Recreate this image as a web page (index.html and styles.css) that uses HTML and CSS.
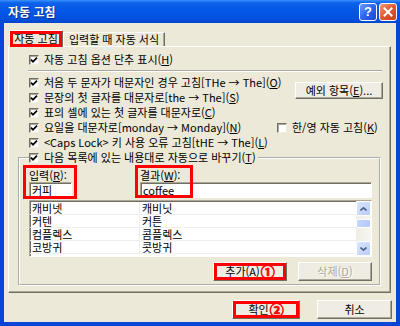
FILE: index.html
```html
<!DOCTYPE html>
<html lang="ko">
<head>
  <meta charset="UTF-8" />
  <title>자동 고침</title>
  <link rel="stylesheet" href="styles.css">
</head>
<body>
  <div class="window">
    <div class="titlebar">
      <span class="title">자동 고침</span>
      <div class="tb-buttons">
        <span class="tb-btn tb-help">?</span>
        <span class="tb-btn tb-close">
          <svg width="10" height="10" viewBox="0 0 10 10"><path d="M1.5 1.5 L8.5 8.5 M8.5 1.5 L1.5 8.5" stroke="#fff" stroke-width="2" stroke-linecap="square"/></svg>
        </span>
      </div>
    </div>

    <div class="client">
      <div class="tabs">
        <div class="tab active mark">자동 고침</div>
        <div class="tab">입력할 때 자동 서식</div>
      </div>

      <div class="panel">
        <div class="chk indent"><span class="cb on"><svg viewBox="0 0 8 8"><path d="M1 3.6 L3 5.8 L7 1.6" /></svg></span>자동 고침 옵션 단추 표시(<u>H</u>)</div>
        <div class="sep"></div>

        <div class="opts">
          <div class="opt-list">
            <div class="chk"><span class="cb on"><svg viewBox="0 0 8 8"><path d="M1 3.6 L3 5.8 L7 1.6" /></svg></span>처음 두 문자가 대문자인 경우 고침[THe → The](<u>O</u>)</div>
            <div class="chk"><span class="cb on"><svg viewBox="0 0 8 8"><path d="M1 3.6 L3 5.8 L7 1.6" /></svg></span>문장의 첫 글자를 대문자로[the → The](<u>S</u>)</div>
            <div class="chk"><span class="cb on"><svg viewBox="0 0 8 8"><path d="M1 3.6 L3 5.8 L7 1.6" /></svg></span>표의 셀에 있는 첫 글자를 대문자로(<u>C</u>)</div>
            <div class="chk"><span class="cb on"><svg viewBox="0 0 8 8"><path d="M1 3.6 L3 5.8 L7 1.6" /></svg></span>요일을 대문자로[monday → Monday](<u>N</u>)</div>
            <div class="chk"><span class="cb on"><svg viewBox="0 0 8 8"><path d="M1 3.6 L3 5.8 L7 1.6" /></svg></span>&lt;Caps Lock&gt; 키 사용 오류 고침[tHE → The](<u>L</u>)</div>
          </div>
          <div class="opt-side">
            <button class="btn btn-exc">예외 항목(<u>E</u>)...</button>
            <div class="chk hanyoung"><span class="cb"></span>한/영 자동 고침(<u>K</u>)</div>
          </div>
        </div>

        <fieldset class="group">
          <legend class="legend">
            <span class="chk"><span class="cb on"><svg viewBox="0 0 8 8"><path d="M1 3.6 L3 5.8 L7 1.6" /></svg></span>다음 목록에 있는 내용대로 자동으로 바꾸기(<u>T</u>)</span>
          </legend>

          <div class="fields">
            <div class="field mark-in">
              <div class="field-label">입력(<u>R</u>):</div>
              <div class="input">커피</div>
            </div>
            <div class="field mark-out">
              <div class="field-label">결과(<u>W</u>):</div>
              <div class="input">coffee</div>
            </div>
          </div>

          <div class="list">
            <div class="rows">
              <div class="row"><span>캐비넷</span><span>캐비닛</span></div>
              <div class="row"><span>커텐</span><span>커튼</span></div>
              <div class="row"><span>컴플렉스</span><span>콤플렉스</span></div>
              <div class="row"><span>코방귀</span><span>콧방귀</span></div>
            </div>
            <div class="scroll">
              <div class="sb-btn"><svg width="7" height="4" viewBox="0 0 7 4"><path d="M0.5 3.5 L3.5 0.8 L6.5 3.5" /></svg></div>
              <div class="sb-thumb"></div>
              <div class="sb-btn sb-down"><svg width="7" height="4" viewBox="0 0 7 4"><path d="M0.5 0.5 L3.5 3.2 L6.5 0.5" /></svg></div>
            </div>
          </div>

          <div class="group-btns">
            <button class="btn mark">추가(<u>A</u>)<span class="num">①</span></button>
            <button class="btn disabled">삭제(<u>D</u>)</button>
          </div>
        </fieldset>
      </div>

      <div class="dlg-btns">
        <button class="btn btn-ok mark">확인<span class="num">②</span></button>
        <button class="btn btn-cancel">취소</button>
      </div>
    </div>
  </div>
</body>
</html>
```

FILE: styles.css
```css
* {
  box-sizing: border-box;
}

body {
  margin: 0;
  font-family: "Noto Sans CJK KR", "Noto Sans", sans-serif;
  font-size: 11px;
  color: #000;
}

.window {
  width: 400px;
  height: 326px;
  background: #0a44d8;
  display: flex;
  flex-direction: column;
}

/* title bar */
.titlebar {
  height: 23px;
  flex: none;
  display: flex;
  align-items: center;
  justify-content: space-between;
  padding: 0 3px 0 8px;
  background: linear-gradient(#3a90ff 0, #0c60ea 3px, #0357e6 11px, #0251de 19px, #0145cc 23px);
}

.title {
  color: #fff;
  font-weight: bold;
  font-size: 12px;
  line-height: 14px;
  text-shadow: 1px 1px 0 #0a2f8a;
}

.tb-buttons {
  display: flex;
  gap: 2px;
}

.tb-btn {
  width: 18px;
  height: 18px;
  border: 1px solid #fff;
  border-radius: 3px;
  display: flex;
  align-items: center;
  justify-content: center;
  color: #fff;
}

.tb-help {
  background: linear-gradient(135deg, #6d9cfb, #2a60ec 55%, #1b48cc);
  font-family: "Liberation Sans", sans-serif;
  font-weight: bold;
  font-size: 13px;
  line-height: 13px;
}

.tb-close {
  background: linear-gradient(135deg, #f29a76, #e2592f 50%, #c9421c);
}

/* client area */
.client {
  flex: 1;
  margin: 0 4px 4px;
  background: #ece9d8;
  padding: 7px 5px 0 4px;
  display: flex;
  flex-direction: column;
}

.tabs {
  display: flex;
  align-items: flex-end;
  height: 16px;
  padding-left: 1px;
}

.tab {
  height: 14px;
  line-height: 13px;
  text-align: center;
  background: #ece9d8;
  border: 1px solid;
  border-color: #fff #716f64 transparent #fff;
  border-bottom: none;
  box-shadow: inset -1px 0 0 #aca899;
}

.tab:nth-child(2) {
  width: 102px;
}

.tab.active {
  width: 54px;
  height: 17px;
  line-height: 15px;
  margin-bottom: -1px;
  position: relative;
  z-index: 1;
}

.panel {
  border: 1px solid;
  border-color: #fff #716f64 #716f64 #fff;
  box-shadow: inset -1px -1px 0 #aca899;
  padding: 5px 9px 6px 9px;
}

/* checkbox rows */
.chk {
  display: flex;
  align-items: center;
  height: 15px;
  line-height: 15px;
  white-space: nowrap;
}

.indent {
  padding-left: 11px;
}

.cb {
  width: 10px;
  height: 10px;
  flex: none;
  margin-right: 5px;
  background: #fff;
  border: 1px solid;
  border-color: #716f64 #f1efe2 #f1efe2 #716f64;
  box-shadow: inset 1px 1px 0 #aca899;
  display: flex;
  align-items: center;
  justify-content: center;
}

.cb svg {
  width: 8px;
  height: 8px;
}

.cb svg path {
  fill: none;
  stroke: #000;
  stroke-width: 1.8;
}

.sep {
  height: 2px;
  border-top: 1px solid #aca899;
  border-bottom: 1px solid #fff;
  margin: 3px -1px 3px 10px;
}

.opts {
  display: flex;
  padding-left: 11px;
  margin-right: -2px;
}

.opt-list {
  width: 248px;
  flex: none;
}

.opt-side {
  flex: 1;
  display: grid;
  grid-template-rows: 30px 15px 15px;
}

.hanyoung {
  grid-row: 3;
}

/* buttons */
.btn {
  width: 74px;
  height: 19px;
  padding: 0;
  font: inherit;
  color: #000;
  background: #efede3;
  border: 1px solid;
  border-color: #fff #716f64 #716f64 #fff;
  box-shadow: inset -1px -1px 0 #aca899;
  display: flex;
  align-items: center;
  justify-content: center;
  line-height: 13px;
}

.btn-exc {
  width: 88px;
  height: 17px;
  justify-self: end;
  align-self: center;
}

.btn.disabled {
  color: #aca899;
  text-shadow: 1px 1px 0 #fff;
}

.num {
  color: #f00;
  font-weight: bold;
  font-size: 14px;
  line-height: 13px;
  margin-left: 1px;
  -webkit-text-stroke: 0.7px #f00;
}

/* red annotation boxes */
.mark {
  position: relative;
}

.mark::after {
  content: "";
  position: absolute;
  inset: 0;
  border: 3px solid #f00;
  pointer-events: none;
}

/* group box */
.group {
  margin: 0;
  min-width: 0;
  padding: 3px 7px 3px 9px;
  border: 2px groove #fff;
}

.legend {
  padding: 0 2px 0 0;
  height: 15px;
}

.fields {
  display: grid;
  grid-template-columns: 43px 1fr;
  column-gap: 68px;
}

.field {
  position: relative;
}

.field-label {
  height: 14px;
  line-height: 14px;
}

.input {
  height: 16px;
  background: #fff;
  border: 1px solid;
  border-color: #aca899 #fff #fff #aca899;
  box-shadow: inset 1px 1px 0 #716f64;
  padding: 0 2px;
  line-height: 14px;
}

.mark-in::after,
.mark-out::after {
  content: "";
  position: absolute;
  border: 3px solid #f00;
}

.mark-in::after {
  left: -6px;
  right: -5px;
  top: -3px;
  bottom: -1px;
}

.mark-out::after {
  left: -5px;
  width: 52px;
  top: -3px;
  bottom: 0;
}

/* list */
.list {
  margin-top: 2px;
  height: 57px;
  display: flex;
  background: #fff;
  border: 1px solid;
  border-color: #aca899 #fff #fff #aca899;
  box-shadow: inset 1px 1px 0 #716f64;
  overflow: hidden;
}

.rows {
  flex: 1;
  padding-top: 1px;
}

.row {
  display: grid;
  grid-template-columns: 110px 1fr;
  height: 13px;
  line-height: 12px;
  border-bottom: 1px solid #efefef;
}

.row span {
  padding-left: 2px;
}

.row span:first-child {
  border-right: 1px solid #efefef;
}

.scroll {
  width: 15px;
  flex: none;
  display: flex;
  flex-direction: column;
  background: linear-gradient(90deg, #eeede5, #f7f6f1);
}

.sb-btn {
  height: 15px;
  flex: none;
  border: 1px solid #fff;
  border-radius: 2px;
  background: linear-gradient(135deg, #dce7fe, #b9cdf9);
  display: flex;
  align-items: center;
  justify-content: center;
}

.sb-btn path {
  fill: none;
  stroke: #4d6185;
  stroke-width: 1.6;
}

.sb-thumb {
  height: 9px;
  margin-top: 3px;
  border: 1px solid #fff;
  border-radius: 2px;
  background: linear-gradient(90deg, #c6d5fc, #b4c8f6);
}

.sb-down {
  margin-top: auto;
}

.group-btns {
  display: flex;
  justify-content: flex-end;
  gap: 11px;
  margin-top: 5px;
}

/* dialog buttons */
.dlg-btns {
  display: flex;
  justify-content: flex-end;
  gap: 17px;
  margin: 7px -1px 0 0;
}

.btn-ok {
  width: 68px;
}

.btn-cancel {
  width: 75px;
}
```
